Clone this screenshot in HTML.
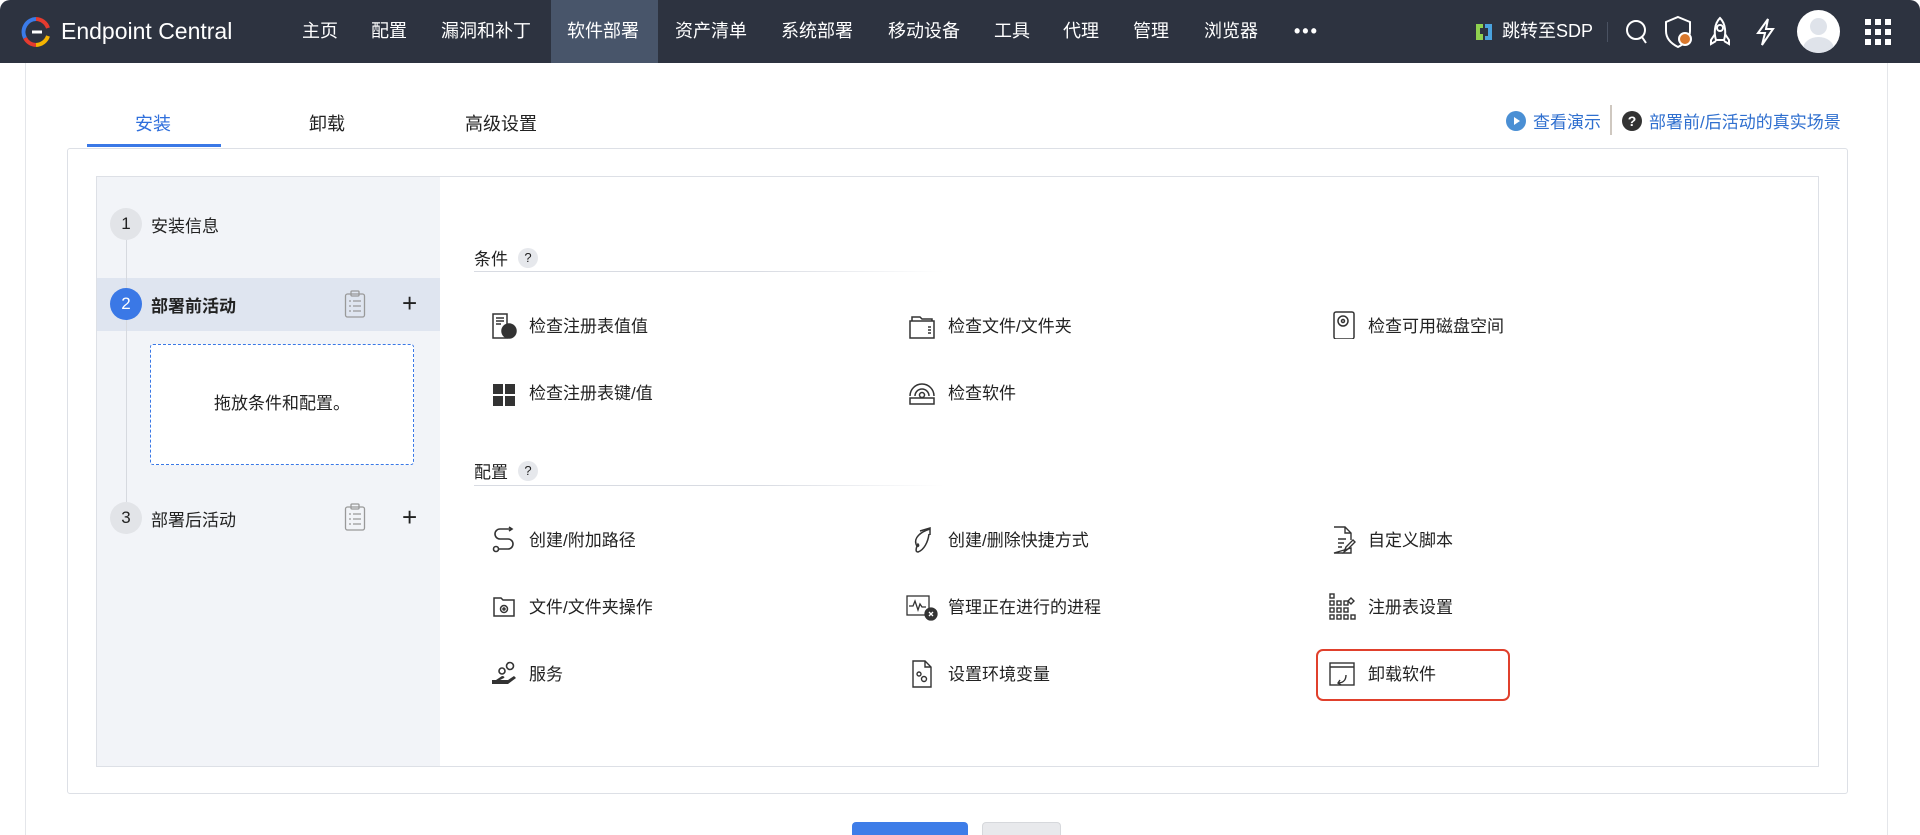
<!DOCTYPE html>
<html><head><meta charset="utf-8"><style>
*{margin:0;padding:0;box-sizing:border-box}
html,body{width:1920px;height:835px;overflow:hidden}
body{background:#fff;font-family:"Liberation Sans","Noto Sans CJK SC",sans-serif;color:#222;position:relative}
.a{position:absolute;white-space:nowrap}
.nav{position:absolute;left:0;top:0;width:1920px;height:63px;background:#2d3340;border-radius:10px 10px 0 0}
.ni{position:absolute;top:0;height:63px;line-height:63px;color:#fff;font-size:18px}
.it{position:absolute;font-size:17px;line-height:24px;color:#222}
.ic{position:absolute;width:28px;height:28px}
</style></head><body>
<div class="nav">
 <svg class="a" style="left:20px;top:16px" width="32" height="32" viewBox="0 0 32 32"><path d="M16 3 A13 13 0 0 0 5 22" stroke="#3b7be8" stroke-width="4" fill="none"/><path d="M5 22 A13 13 0 0 0 16 29" stroke="#e53b2f" stroke-width="4" fill="none"/><path d="M16 29 A13 13 0 0 0 28 20" stroke="#f5b400" stroke-width="4" fill="none"/><path d="M16 3 A13 13 0 0 1 28 12" stroke="#e53b2f" stroke-width="4" fill="none"/><path d="M12 16 H22" stroke="#fff" stroke-width="3"/></svg>
 <div class="ni" style="left:61px;font-size:23px">Endpoint Central</div>
 <div class="ni" style="left:302px">主页</div>
 <div class="ni" style="left:371px">配置</div>
 <div class="ni" style="left:441px">漏洞和补丁</div>
 <div style="position:absolute;left:551px;top:0;width:107px;height:63px;background:#48556a"></div>
 <div class="ni" style="left:567px">软件部署</div>
 <div class="ni" style="left:675px">资产清单</div>
 <div class="ni" style="left:781px">系统部署</div>
 <div class="ni" style="left:888px">移动设备</div>
 <div class="ni" style="left:994px">工具</div>
 <div class="ni" style="left:1063px">代理</div>
 <div class="ni" style="left:1133px">管理</div>
 <div class="ni" style="left:1204px">浏览器</div>
 <div class="ni" style="left:1294px;font-weight:bold;letter-spacing:2px">•••</div>
 <svg class="a" style="left:1474px;top:22px" width="20" height="20" viewBox="0 0 20 20"><path d="M2 2h7v4H6v6h3v6H2z" fill="#8fd14f"/><path d="M11 2h7v16h-7v-4h3V6h-3z" fill="#4aa3df"/></svg>
 <div class="ni" style="left:1502px;font-size:18px">跳转至SDP</div>
 <div class="a" style="left:1607px;top:22px;width:1px;height:20px;background:#4a5262"></div>
 <svg class="a" style="left:1624px;top:18px" width="26" height="28" viewBox="0 0 26 28" fill="none" stroke="#fff" stroke-width="2"><circle cx="12" cy="12" r="9"/><path d="M18 19l4 6"/></svg>
 <svg class="a" style="left:1664px;top:15px" width="30" height="34" viewBox="0 0 30 34" fill="none" stroke="#fff" stroke-width="2"><path d="M14 2 L26 7 V16 C26 24 20 29 14 32 C8 29 2 24 2 16 V7Z"/><circle cx="21" cy="24" r="6" fill="#d9782d" stroke="#fff"/></svg>
 <svg class="a" style="left:1708px;top:16px" width="24" height="32" viewBox="0 0 24 32" fill="none" stroke="#fff" stroke-width="2"><path d="M12 2 C18 8 18 18 16 24 H8 C6 18 6 8 12 2Z"/><circle cx="12" cy="12" r="3"/><path d="M7 18 L3 24 V28 L8 25 M17 18 L21 24 V28 L16 25"/></svg>
 <svg class="a" style="left:1753px;top:17px" width="24" height="30" viewBox="0 0 24 30" fill="none" stroke="#fff" stroke-width="2"><path d="M15 2 L5 16 H12 L9 28 L20 12 H13 Z"/></svg>
 <div class="a" style="left:1797px;top:10px;width:43px;height:43px;border-radius:50%;background:#fff;overflow:hidden"><div class="a" style="left:13px;top:8px;width:17px;height:17px;border-radius:50%;background:#dfe3ea"></div><div class="a" style="left:6px;top:27px;width:31px;height:24px;border-radius:50%;background:#dfe3ea"></div></div>
 <svg class="a" style="left:1864px;top:18px" width="28" height="28" viewBox="0 0 28 28" fill="#fff"><rect x="1" y="1" width="6" height="6"/><rect x="11" y="1" width="6" height="6"/><rect x="21" y="1" width="6" height="6"/><rect x="1" y="11" width="6" height="6"/><rect x="11" y="11" width="6" height="6"/><rect x="21" y="11" width="6" height="6"/><rect x="1" y="21" width="6" height="6"/><rect x="11" y="21" width="6" height="6"/><rect x="21" y="21" width="6" height="6"/></svg>
</div>
<div class="a" style="left:25px;top:63px;width:1px;height:772px;background:#e4e6ea"></div>
<div class="a" style="left:1887px;top:63px;width:1px;height:772px;background:#e4e6ea"></div>
<div class="a" style="left:135px;top:110px;font-size:18px;color:#2f6fdc">安装</div>
<div class="a" style="left:87px;top:144px;width:134px;height:3px;background:#3a78e6"></div>
<div class="a" style="left:309px;top:110px;font-size:18px">卸载</div>
<div class="a" style="left:465px;top:110px;font-size:18px">高级设置</div>
<svg class="a" style="left:1506px;top:111px" width="20" height="20" viewBox="0 0 20 20"><circle cx="10" cy="10" r="10" fill="#4a8fd4"/><path d="M8 6 L14 10 L8 14Z" fill="#fff"/></svg>
<div class="a" style="left:1533px;top:108px;font-size:17px;color:#2f6fcf">查看演示</div>
<div class="a" style="left:1610px;top:105px;width:2px;height:30px;background:#cfc8c0"></div>
<svg class="a" style="left:1622px;top:111px" width="20" height="20" viewBox="0 0 20 20"><circle cx="10" cy="10" r="10" fill="#333"/><text x="10" y="15" font-size="14" font-weight="bold" fill="#fff" text-anchor="middle" font-family="Liberation Sans">?</text></svg>
<div class="a" style="left:1649px;top:108px;font-size:17px;color:#2f6fcf">部署前/后活动的真实场景</div>
<div class="a" style="left:67px;top:148px;width:1781px;height:646px;border:1px solid #dde0e6;border-radius:3px"></div>
<div class="a" style="left:96px;top:176px;width:1723px;height:591px;border:1px solid #dde0e6;background:#fff"></div>
<div class="a" style="left:97px;top:177px;width:343px;height:589px;background:#f2f4f8"></div>
<div class="a" style="left:97px;top:278px;width:343px;height:53px;background:#dfe5f0"></div>
<div class="a" style="left:126px;top:224px;width:1px;height:295px;background:#d6d9df"></div>
<div class="a" style="left:110px;top:208px;width:32px;height:32px;border-radius:50%;background:#e2e4e8;text-align:center;line-height:32px;font-size:17px">1</div>
<div class="a" style="left:151px;top:212px;font-size:17px">安装信息</div>
<div class="a" style="left:110px;top:288px;width:32px;height:32px;border-radius:50%;background:#3a78e6;color:#fff;text-align:center;line-height:32px;font-size:17px">2</div>
<div class="a" style="left:151px;top:292px;font-size:17px;font-weight:bold">部署前活动</div>
<div class="a" style="left:110px;top:502px;width:32px;height:32px;border-radius:50%;background:#e2e4e8;text-align:center;line-height:32px;font-size:17px">3</div>
<div class="a" style="left:151px;top:506px;font-size:17px">部署后活动</div>
<svg class="a" style="left:344px;top:290px" width="22" height="28" viewBox="0 0 22 28" fill="none" stroke="#999" stroke-width="1.3"><rect x="1.5" y="4" width="19" height="23" rx="2"/><rect x="7" y="1" width="8" height="5" rx="1"/><path d="M5 11h2M9 11h8M5 16h2M9 16h8M5 21h2M9 21h8"/></svg>
<svg class="a" style="left:344px;top:503px" width="22" height="28" viewBox="0 0 22 28" fill="none" stroke="#999" stroke-width="1.3"><rect x="1.5" y="4" width="19" height="23" rx="2"/><rect x="7" y="1" width="8" height="5" rx="1"/><path d="M5 11h2M9 11h8M5 16h2M9 16h8M5 21h2M9 21h8"/></svg>
<div class="a" style="left:402px;top:288px;font-size:26px;line-height:30px">+</div>
<div class="a" style="left:402px;top:502px;font-size:26px;line-height:30px">+</div>
<div class="a" style="left:150px;top:344px;width:264px;height:121px;border:1.5px dashed #3a78e6;background:#fff;border-radius:3px;text-align:center;line-height:118px;font-size:17px">拖放条件和配置。</div>
<div class="a" style="left:474px;top:245px;font-size:17px">条件</div>
<div class="a" style="left:518px;top:248px;width:20px;height:20px;border-radius:50%;background:#e6e8ec;font-size:13px;text-align:center;line-height:20px">?</div>
<div class="a" style="left:474px;top:271px;width:470px;height:1px;background:linear-gradient(90deg,#d8dbe2,#d8dbe2 60%,#fff)"></div>
<div class="a" style="left:474px;top:458px;font-size:17px">配置</div>
<div class="a" style="left:518px;top:461px;width:20px;height:20px;border-radius:50%;background:#e6e8ec;font-size:13px;text-align:center;line-height:20px">?</div>
<div class="a" style="left:474px;top:485px;width:470px;height:1px;background:linear-gradient(90deg,#d8dbe2,#d8dbe2 60%,#fff)"></div>
<svg class="ic" style="left:490px;top:312px" viewBox="0 0 28 28" fill="none" stroke="#333" stroke-width="1.5"><path d="M3 2h14v24H3z"/><path d="M6 6h8M6 9h8M6 12h5"/><circle cx="19" cy="19" r="7" fill="#333"/></svg>
<div class="it" style="left:529px;top:315px">检查注册表值值</div>
<svg class="ic" style="left:490px;top:381px" viewBox="0 0 28 28" fill="#333"><rect x="3" y="3" width="10" height="10"/><rect x="15" y="3" width="10" height="10"/><rect x="3" y="15" width="10" height="10"/><rect x="15" y="15" width="10" height="10"/></svg>
<div class="it" style="left:529px;top:382px">检查注册表键/值</div>
<svg class="ic" style="left:908px;top:313px" viewBox="0 0 28 28" fill="none" stroke="#333" stroke-width="1.5"><path d="M2 8h24v17H2z"/><path d="M4 8V4h8l2 2h10v2"/><path d="M20 14h3M20 17h3M20 20h3"/></svg>
<div class="it" style="left:948px;top:315px">检查文件/文件夹</div>
<svg class="ic" style="left:908px;top:378px" viewBox="0 0 28 28" fill="none" stroke="#333" stroke-width="1.5"><path d="M2 18 A12 12 0 0 1 26 18"/><path d="M7 18 A7 7 0 0 1 21 18"/><circle cx="14" cy="17" r="2.5"/><rect x="2" y="20" width="24" height="6"/></svg>
<div class="it" style="left:948px;top:382px">检查软件</div>
<svg class="ic" style="left:1330px;top:311px" viewBox="0 0 28 28" fill="none" stroke="#333" stroke-width="1.5"><rect x="4" y="1" width="20" height="27" rx="2"/><circle cx="13" cy="10" r="5"/><circle cx="13" cy="10" r="1.5"/></svg>
<div class="it" style="left:1368px;top:315px">检查可用磁盘空间</div>
<svg class="ic" style="left:490px;top:526px" viewBox="0 0 28 28" fill="none" stroke="#333" stroke-width="1.6"><path d="M21 3 H10 A5 5 0 0 0 10 13 H18 A5 5 0 0 1 18 23 H9"/><path d="M19 1l3 2-3 2"/><circle cx="6" cy="23" r="2.5"/></svg>
<div class="it" style="left:529px;top:529px">创建/附加路径</div>
<svg class="ic" style="left:490px;top:593px" viewBox="0 0 28 28" fill="none" stroke="#333" stroke-width="1.5"><path d="M4 5h7l2 2h11v16H4z"/><circle cx="14" cy="16" r="3.5"/><circle cx="14" cy="16" r="1"/></svg>
<div class="it" style="left:529px;top:596px">文件/文件夹操作</div>
<svg class="ic" style="left:490px;top:660px" viewBox="0 0 28 28" fill="#333"><path d="M2 20h4l6-4c2 0 3 1 2 2l-4 2h8l6-4 2 2-8 6H2z"/><circle cx="12" cy="11" r="3" fill="none" stroke="#333" stroke-width="1.6"/><circle cx="20" cy="6" r="3.5" fill="none" stroke="#333" stroke-width="1.6"/></svg>
<div class="it" style="left:529px;top:663px">服务</div>
<svg class="ic" style="left:908px;top:526px" viewBox="0 0 28 28" fill="none" stroke="#333" stroke-width="1.5"><path d="M12 5 L22 2 L22 9"/><path d="M22 3 C12 6 6 12 8 18 C9 22 12 20 10 18 C8 22 7 26 10 26 C16 24 20 16 21 8"/></svg>
<div class="it" style="left:948px;top:529px">创建/删除快捷方式</div>
<svg class="ic" style="left:906px;top:594px;width:32px" viewBox="0 0 32 28" fill="none" stroke="#333" stroke-width="1.3"><rect x="1" y="2" width="22" height="19"/><path d="M3 12h4l2-5 3 9 2-6 2 3h4"/><circle cx="25" cy="20" r="6" fill="#333"/><path d="M23 18l4 4M27 18l-4 4" stroke="#fff"/></svg>
<div class="it" style="left:948px;top:596px">管理正在进行的进程</div>
<svg class="ic" style="left:908px;top:660px" viewBox="0 0 28 28" fill="none" stroke="#333" stroke-width="1.4"><path d="M5 1h12l6 6v20H5z"/><path d="M17 1v6h6"/><circle cx="11" cy="14" r="2"/><circle cx="16" cy="19" r="2.5"/></svg>
<div class="it" style="left:948px;top:663px">设置环境变量</div>
<svg class="ic" style="left:1330px;top:526px" viewBox="0 0 28 28" fill="none" stroke="#333" stroke-width="1.4"><path d="M4 1h11l6 6v7M21 22v5H4z"/><path d="M15 1v6h6"/><path d="M8 13h8M8 17h6M8 21h4"/><path d="M14 26l2-5 7-7 2 2-7 7z"/></svg>
<div class="it" style="left:1368px;top:529px">自定义脚本</div>
<svg class="ic" style="left:1328px;top:592px" viewBox="0 0 28 28" fill="none" stroke="#333" stroke-width="1.4"><rect x="2" y="2" width="4" height="4"/><rect x="2" y="9" width="4" height="4"/><rect x="9" y="9" width="4" height="4"/><rect x="16" y="9" width="4" height="4"/><rect x="2" y="16" width="4" height="4"/><rect x="9" y="16" width="4" height="4"/><rect x="16" y="16" width="4" height="4"/><rect x="2" y="23" width="4" height="4"/><rect x="9" y="23" width="4" height="4"/><rect x="16" y="23" width="4" height="4"/><rect x="23" y="23" width="4" height="4"/><path d="M23 6l3 3-3 3-3-3z"/></svg>
<div class="it" style="left:1368px;top:596px">注册表设置</div>
<div class="a" style="left:1316px;top:649px;width:194px;height:52px;border:2px solid #e0402c;border-radius:7px"></div>
<svg class="ic" style="left:1328px;top:661px" viewBox="0 0 28 28" fill="none" stroke="#333" stroke-width="1.4"><rect x="2" y="2" width="24" height="22"/><path d="M2 6h24"/><path d="M18 14 C18 20 14 22 10 22"/><path d="M12 19l-2 3 3 2"/></svg>
<div class="it" style="left:1368px;top:663px">卸载软件</div>
<div class="a" style="left:852px;top:822px;width:116px;height:13px;background:#3e7de8;border-radius:4px 4px 0 0"></div>
<div class="a" style="left:982px;top:822px;width:79px;height:13px;background:#e8e9ec;border:1px solid #d6d8dc;border-bottom:none;border-radius:4px 4px 0 0"></div>
</body></html>
